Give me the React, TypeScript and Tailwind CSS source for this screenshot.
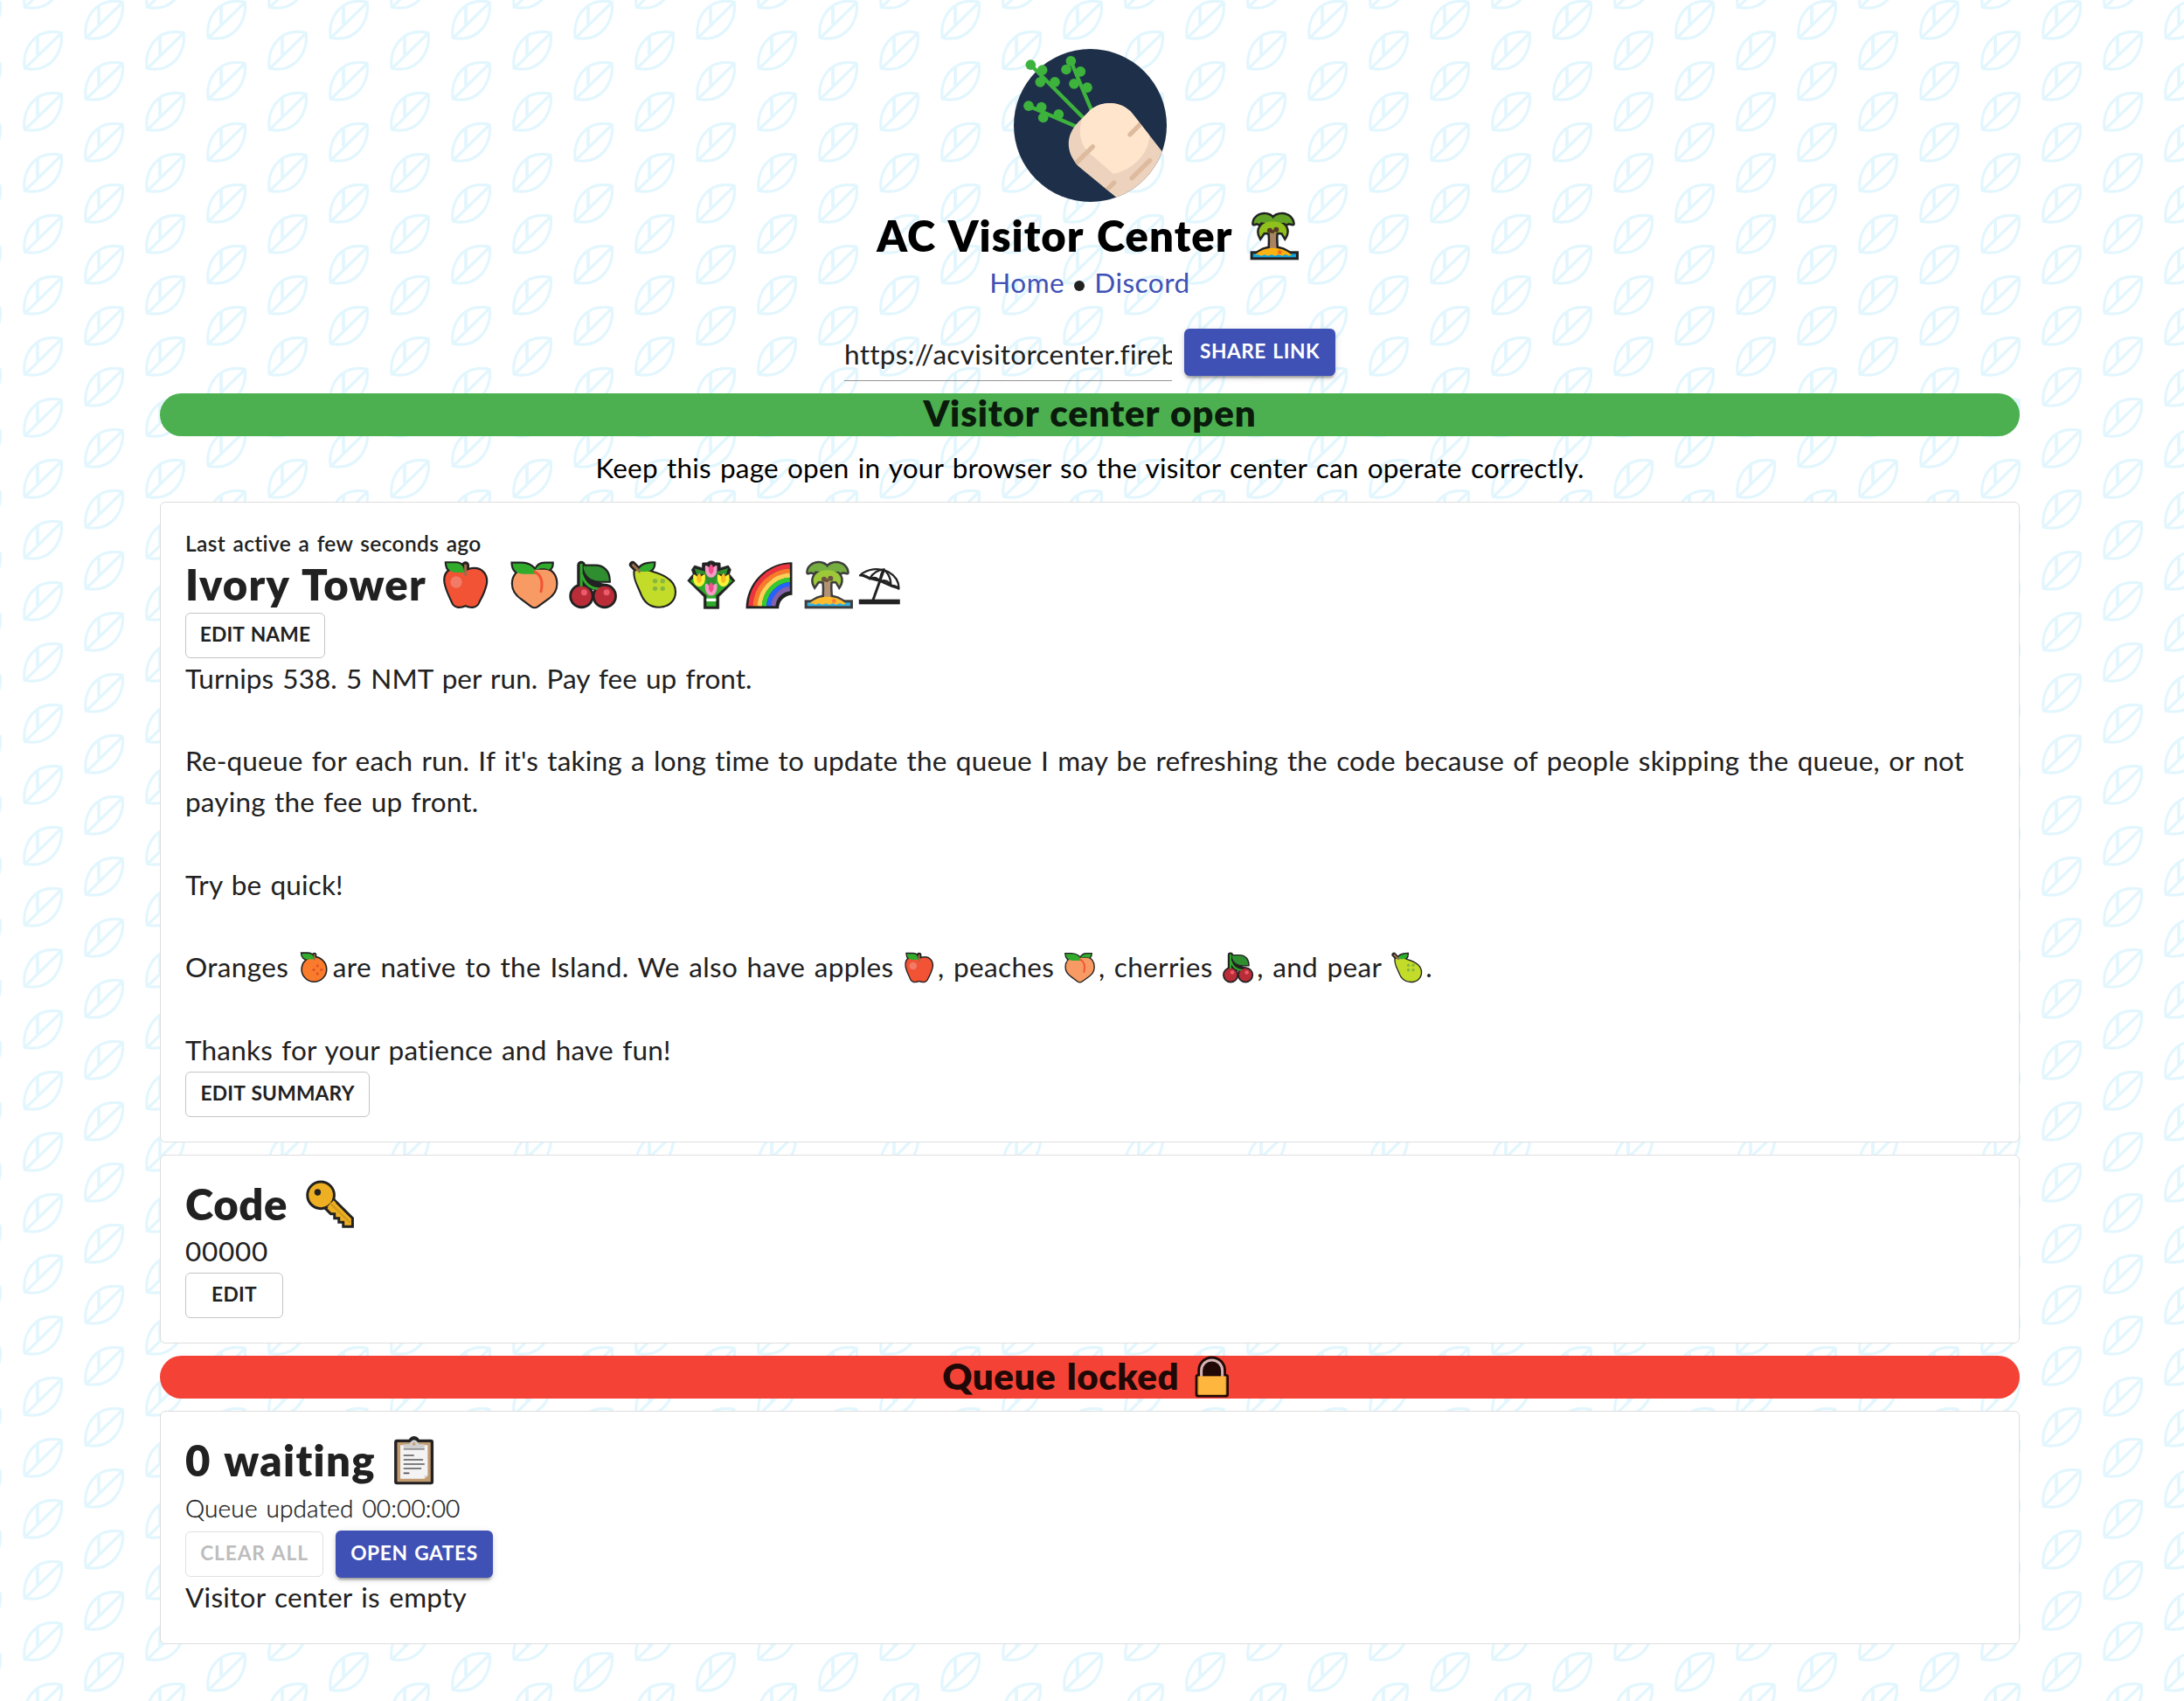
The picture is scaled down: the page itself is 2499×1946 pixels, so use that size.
import React from "react";

const INK = "#222222";

/* Glyph-sized drawing that scales with the surrounding font size. */
function Glyph({ box, label, className = "", children }: { box: string; label: string; className?: string; children: React.ReactNode }) {
  return (
    <svg
      viewBox={box}
      role="img"
      aria-label={label}
      className={"inline-block h-[1.1429em] w-[1.3714em] shrink-0 align-[-0.2041em] " + className}
    >
      {children}
    </svg>
  );
}

/* Draws a group twice: a thick dark outline first, then the coloured fills. */
function Outlined({ shape, width = 15 }: { shape: React.ReactNode; width?: number }) {
  return (
    <g fill={INK} stroke={INK} strokeWidth={width} strokeLinejoin="round">
      {shape}
    </g>
  );
}

function Apple({ className = "" }: { className?: string }) {
  const body = "M104 100C90 108 85 125 88 143C92 165 104 188 112 206C118 226 138 227 157 218C176 227 196 226 202 206C212 188 223 165 227 143C230 115 213 95 187 95C172 95 162 100 156 105C145 97 115 96 104 100Z";
  const leaf = "M92 75H125C142 75 153 88 152 107H125C105 107 93 95 92 75Z";
  return (
    <Glyph box="56 65 201.6 168" label="red apple" className={className}>
      <Outlined shape={<><path d={body} /><path d={leaf} strokeLinejoin="miter" /><path d="M157 82V112" strokeWidth="26" strokeLinecap="round" /></>} width={13} />
      <path d={body} fill="#f25335" />
      <path d={leaf} fill="#31ab2c" />
      <path d="M157 79V118" stroke="#9c6d48" strokeWidth="9" />
      <circle cx="125" cy="140" r="20" fill="#f27b68" />
    </Glyph>
  );
}

function Peach({ className = "" }: { className?: string }) {
  const body = "M320 145C320 118 338 98 362 97H430C455 98 468 120 468 145C468 168 456 183 441 194L404 221Q394 228 384 221L349 195C330 181 320 165 320 145Z";
  const l1 = "M319 76H350C377 76 396 92 402 112H357C334 112 320 98 319 76Z";
  const l2 = "M454 76H430C412 76 402 86 398 98C412 91 430 91 443 97C451 92 454 86 454 76Z";
  return (
    <Glyph box="293.1 65 201.6 168" label="peach" className={className}>
      <Outlined shape={<><path d={body} /><path d={l1} strokeLinejoin="miter" /><path d={l2} strokeLinejoin="miter" /></>} width={13} />
      <path d={body} fill="#f89a63" />
      <path d={l1} fill="#31ab2c" />
      <path d={l2} fill="#31ab2c" />
      <path d="M396 105C418 117 423 143 416 172" fill="none" stroke="#f25335" strokeWidth="9" strokeLinecap="round" />
    </Glyph>
  );
}

function Cherries({ className = "" }: { className?: string }) {
  const leaf = "M562 85H603C632 85 650 105 650 136H620C587 136 565 117 562 85Z";
  return (
    <Glyph box="494.7 65 201.6 168" label="cherries" className={className}>
      <Outlined shape={<><path d={leaf} strokeLinejoin="miter" /><circle cx="556" cy="188" r="36" /><circle cx="635" cy="188" r="36" /><path d="M555 82V150" strokeWidth="29" strokeLinecap="round" /><path d="M560 115L585 160H630V145" /></>} width={13} />
      <path d={leaf} fill="#2f8e30" />
      <path d="M556 112C566 145 585 163 618 163" fill="none" stroke="#31ab2c" strokeWidth="9" />
      <path d="M555 77V158" stroke="#31ab2c" strokeWidth="9" />
      <circle cx="556" cy="188" r="34" fill="#ba2d38" />
      <circle cx="635" cy="188" r="34" fill="#ba2d38" />
      <circle cx="565" cy="175" r="10.5" fill="#ec5a6c" />
      <circle cx="642" cy="175" r="10.5" fill="#ec5a6c" />
    </Glyph>
  );
}

function Pear({ className = "" }: { className?: string }) {
  const body = "M737 103C750 97 775 97 800 108C845 121 873 142 873 173C873 205 848 223 818 223C786 223 768 202 758 174C750 152 734 130 737 103Z";
  const leaf = "M748 103C752 86 770 75 802 75C802 95 790 104 772 104Z";
  return (
    <Glyph box="696.3 65 201.6 168" label="pear" className={className}>
      <Outlined shape={<><path d={body} /><path d={leaf} strokeLinejoin="miter" /><path d="M729 80L750 102" strokeWidth="24" strokeLinecap="round" /></>} width={13} />
      <path d={body} fill="#c3dc2a" />
      <path d={leaf} fill="#31ab2c" />
      <path d="M728 79L755 106" stroke="#9c6d48" strokeWidth="9" />
      {[[806, 136], [832, 136], [806, 162], [832, 162]].map(([x, y]) => (
        <circle key={x + "-" + y} cx={x} cy={y} r="8" fill="#86b740" />
      ))}
    </Glyph>
  );
}

function Tulip({ x, y, light, deep }: { x: number; y: number; light: string; deep: string }) {
  return (
    <g transform={`translate(${x} ${y})`}>
      <path d="M-20 -17C-12 -16 -9 -13 -7 -9Q0 -24 7 -9C9 -13 12 -16 20 -17C23 5 16 24 0 24C-16 24 -23 5 -20 -17Z" fill={light} />
      <path d="M0 -22C12 -12 11 8 0 13C-11 8 -12 -12 0 -22Z" fill={deep} />
    </g>
  );
}

function Bouquet() {
  return (
    <Glyph box="27.9 65 201.6 168" label="bouquet">
      <path d="M48 135L67 112L62 97L72 83L98 91L99 74L115 73Q129 61 144 73L160 74L161 91L188 83L197 97L192 112L211 135L156 190V231H104V190Z" fill={INK} stroke={INK} strokeWidth="2" strokeLinejoin="round" />
      <path d="M57 136L75 120H185L202 136L146 186V223H113V186Z" fill="#31ab2c" />
      <path d="M72 93L108 103L150 103L187 92L180 115L155 112L129 175L103 112L80 115Z" fill="#2f8e30" />
      <rect x="113" y="196" width="33" height="10" fill="#ffffff" />
      <Tulip x={88} y={131} light="#fdf23a" deep="#fbbb21" />
      <Tulip x={171} y={131} light="#fdf23a" deep="#fbbb21" />
      <Tulip x={129} y={100} light="#f59cc8" deep="#f24d8c" />
      <Tulip x={129} y={162} light="#f59cc8" deep="#f24d8c" />
    </Glyph>
  );
}

function Rainbow() {
  const bands: [number, string][] = [[143, "#ee343f"], [127.5, "#f97a2b"], [112, "#ffcf56"], [96.5, "#35cb2e"], [81, "#2463ff"], [65.5, "#8562ae"]];
  return (
    <Glyph box="229.5 65 201.6 168" label="rainbow">
      <path d="M249 231A159 159 0 0 1 408 72V184A47 47 0 0 0 362 231Z" fill={INK} />
      {bands.map(([r, c]) => (
        <path key={c} d={`M${408 - r} 222A${r} ${r} 0 0 1 400 ${228 - r}`} fill="none" stroke={c} strokeWidth="16" />
      ))}
    </Glyph>
  );
}

function Island({ className = "" }: { className?: string }) {
  const back = "M463 107C463 88 480 75 500 75C514 75 524 82 529 90C535 80 548 75 560 75C582 76 596 90 597 107L583 104L575 108L566 103L529 108L488 102L482 108L474 104Z";
  const front = "M486 153C476 135 480 112 508 102Q529 96 550 102C580 112 580 138 570 153L561 138L548 136L538 140L529 135L518 140L508 136L497 137Z";
  const trunk = "M517 130Q520 160 518 192H541Q538 160 540 130Z";
  const sand = "M467 216C485 197 508 190 529 190C552 190 575 197 593 216Z";
  return (
    <Glyph box="431.1 65 201.6 168" label="desert island" className={className}>
      <Outlined shape={<><path d={back} /><path d={front} strokeLinejoin="miter" /><path d={trunk} /><path d={sand} /></>} />
      <rect x="451" y="201" width="166" height="30" fill={INK} />
      <rect x="460" y="210" width="148" height="12" fill="#12a5e0" />
      <path d={trunk} fill="#a98460" />
      <path d={back} fill="#62a226" />
      <path d={front} fill="#8fc01b" />
      <circle cx="518" cy="130" r="9" fill="#573828" />
      <circle cx="540" cy="127" r="9" fill="#573828" />
      <circle cx="528" cy="134" r="6" fill="#573828" />
      <path d="M467 214C485 197 508 190 529 190C552 190 575 197 593 214L583 217L572 212L560 217L548 213L536 217L524 213L512 217L500 213L488 217L478 213Z" fill="#fdb20f" />
      <path d="M552 196L554 201L559 202L556 206L557 211L552 208L547 211L548 206L545 202L550 201Z" fill="#f8651c" stroke="#f8651c" strokeWidth="2" />
    </Glyph>
  );
}

function BeachUmbrella() {
  return (
    <svg viewBox="632.7 65 150 168" role="img" aria-label="umbrella on ground" className="inline-block h-[1.1429em] w-[1.0204em] shrink-0 align-[-0.2041em]">
      <rect x="638" y="199" width="141" height="17" fill={INK} />
      <g fill="none" stroke={INK} strokeWidth="7" strokeLinejoin="round" strokeLinecap="round">
        <path d="M724 97L686 203" strokeWidth="9" />
        <path d="M642 117C666 93 706 90 738 104C763 118 776 138 775 163C766 152 757 151 748 152C740 136 726 132 712 137C701 124 687 122 675 129C665 118 652 116 642 117Z" />
        <path d="M724 97C700 98 684 112 675 128M724 97C713 110 711 124 712 136M724 97C742 112 748 130 748 151" />
        <path d="M652 117L676 127L712 136L748 152L772 160" strokeWidth="9" />
      </g>
    </svg>
  );
}

function Orange({ className = "" }: { className?: string }) {
  return (
    <Glyph box="0 0 201.6 168" label="tangerine" className={className}>
      <Outlined shape={<><circle cx="100" cy="93" r="64" /><path d="M34 8H66C88 8 99 22 98 40H70C46 40 35 28 34 8Z" strokeLinejoin="miter" /><path d="M101 16V38" strokeWidth="25" strokeLinecap="round" /></>} width={13} />
      <circle cx="100" cy="93" r="63" fill="#fb7b2c" />
      <path d="M35 9H66C88 9 99 22 98 40H70C46 40 36 28 35 9Z" fill="#31ab2c" />
      <path d="M101 12V44" stroke="#9c6d48" strokeWidth="9" />
      {[[118, 75], [98, 96], [139, 96], [118, 117]].map(([x, y]) => (
        <circle key={x + "-" + y} cx={x} cy={y} r="8" fill="#e25627" />
      ))}
    </Glyph>
  );
}

function KeyGlyph() {
  return (
    <Glyph box="490.7 150 201.6 168" label="key">
      <path d="M607 219L669 281V310H637V295H622V281H607V266H594L575 247Z" fill="#eeb022" stroke={INK} strokeWidth="9" />
      <circle cx="560" cy="202" r="46" fill="#eeb022" stroke={INK} strokeWidth="9" />
      <path d="M582 242L604 220L612 228L590 250Z" fill="#eeb022" />
      <path d="M592 229L660 296" stroke="#d29c20" strokeWidth="8" />
      <circle cx="549" cy="192" r="11" fill={INK} />
    </Glyph>
  );
}

function Clipboard() {
  return (
    <Glyph box="775.7 129 201.6 168" label="clipboard">
      <circle cx="877" cy="149" r="20" fill={INK} />
      <rect x="809" y="140" width="135" height="155" rx="9" fill={INK} />
      <rect x="819" y="150" width="115" height="136" rx="2" fill="#c39b71" />
      <path d="M830 160H924V264L912 275H830Z" fill="#f3f3f3" />
      <path d="M912 275V264H924Z" fill="#d8d8d8" />
      <path d="M841 171V157H858Q863 156 864 150Q877 133 890 150Q891 156 896 157H913V171Z" fill="#cfcfcf" />
      <circle cx="877" cy="156" r="5" fill="#c39b71" />
      <rect x="841" y="171" width="72" height="5" fill="#8c8c8c" />
      <path d="M841 195H877M841 210H908M841 225H913M841 240H902M841 256H861" stroke="#5a5558" strokeWidth="5" />
    </Glyph>
  );
}

function Lock() {
  return (
    <Glyph box="959.1 61.3 172.8 144" label="locked">
      <path d="M996 135V112A49 49 0 0 1 1094 112V135Z" fill="#200806" />
      <rect x="988" y="124" width="115" height="80" rx="9" fill="#200806" />
      <path d="M1009 134V112A36 36 0 0 1 1081 112V134" fill="none" stroke="#d3b4b3" strokeWidth="9" />
      <rect x="996" y="132" width="99" height="63" fill="#dc9620" />
      <rect x="1000" y="132" width="91" height="63" fill="#ffb63f" />
    </Glyph>
  );
}

function TurnipLogo() {
  const body = "M282 298C236 345 238 402 282 450L440 580H640V490L468 270C430 222 352 222 315 265Z";
  const dots = [[118, 102], [158, 120], [151, 161], [201, 161], [256, 89], [240, 118], [289, 125], [267, 167], [312, 180], [111, 243], [155, 247], [161, 283], [214, 272]];
  return (
    <svg viewBox="60 47.5 525 525" className="h-[175px] w-[175px]" role="img" aria-label="Turnip logo">
      <defs>
        <clipPath id="disc"><circle cx="322.5" cy="310" r="262.5" /></clipPath>
        <clipPath id="turnip"><path d={body} /></clipPath>
      </defs>
      <circle cx="322.5" cy="310" r="262.5" fill="#1e3049" />
      <g stroke="#3db33d" strokeWidth="13">
        <path d="M118 102L310 295M256 90L334 275M111 243L285 318" />
      </g>
      {dots.map(([x, y]) => (
        <circle key={x + "-" + y} cx={x} cy={y} r="17.5" fill="#3db33d" />
      ))}
      <g clipPath="url(#disc)">
        <path d={body} fill="#edd3bd" />
        <g clipPath="url(#turnip)">
          <path d="M315 262C278 295 278 365 318 404Q350 432 402 476C468 462 522 410 526 345L540 200H320Z" fill="#ffe5cc" />
          <path d="M331 383L262 451M459 341L510 290M465 491L527 430M404 507L360 551" stroke="#debb9f" strokeWidth="16" strokeLinecap="round" />
        </g>
      </g>
    </svg>
  );
}

function LeafBackdrop() {
  return (
    <svg className="pointer-events-none absolute inset-0 h-full w-full" aria-hidden="true">
      <defs>
        <g id="leaf" fill="none" stroke="#e2f6fe" strokeWidth="3.2">
          <path d="M28.3 78.2C25 57 39 31 70 37.5C73.5 58 58 84.5 28.3 78.2Z" />
          <path d="M29 78L70 38" />
          <path d="M43 42V63" strokeWidth="3.7" />
        </g>
        <pattern id="leaves" width="140" height="70" patternUnits="userSpaceOnUse">
          <use href="#leaf" />
          <use href="#leaf" y="-70" />
          <use href="#leaf" x="70" y="-35" />
          <use href="#leaf" x="-70" y="-35" />
        </pattern>
      </defs>
      <rect width="100%" height="100%" fill="url(#leaves)" />
    </svg>
  );
}

function Button({ kind = "outlined", className = "", children }: { kind?: "outlined" | "disabled" | "primary"; className?: string; children: React.ReactNode }) {
  const look = {
    outlined: "h-[52px] border border-[#c4c4c4] text-[#212121] bg-white pb-px",
    disabled: "h-[52px] border border-[#e0e0e0] text-[#bdbdbd] bg-white pb-px",
    primary: "h-[54px] bg-[#3f51b5] text-white pb-px shadow-[0_5px_2px_-3px_rgba(0,0,0,0.2),0_3px_3px_0_rgba(0,0,0,0.14),0_2px_8px_0_rgba(0,0,0,0.12)]",
  }[kind];
  return (
    <button className={"flex shrink-0 items-center justify-center whitespace-nowrap rounded-[6px] text-[22.75px] font-bold leading-none [word-spacing:1.4px] " + look + " " + className}>
      {children}
    </button>
  );
}

const heading = "h-[57px] whitespace-nowrap text-[49px] font-extrabold leading-[57px] [word-spacing:3px]";
const card = "rounded-[6px] border border-[#dedede] bg-white px-[28px]";

export default function App() {
  return (
    <div className="relative h-[1946px] w-[2499px] overflow-hidden bg-white font-['Lato','Liberation_Sans',sans-serif] text-[31.5px] leading-[47.25px] tracking-[0.15px] text-[#212121] [word-spacing:2px]">
      <LeafBackdrop />
      <main className="relative ml-[183px] flex w-[2128px] flex-col pt-[56px]">
        <header className="flex flex-col items-center">
          <TurnipLogo />
          <h1 className={heading + " mt-[10px] tracking-[1.05px] text-black"}>
            AC Visitor Center<span className="ml-[13px]"><Island /></span>
          </h1>
          <nav className="mt-[2px] flex h-[47px] whitespace-pre">
            <a className="tracking-[0.5px] text-[#3f51b5]">Home</a>
            <span className="mx-[11px] flex h-[47px] items-center"><span className="mt-[6px] h-[12px] w-[12px] rounded-full bg-[#212121]" /></span>
            <a className="tracking-[0.5px] text-[#3f51b5]">Discord</a>
          </nav>
          <div className="mt-[29px] flex gap-[14px]">
            <input
              readOnly
              defaultValue="https://acvisitorcenter.firebaseapp.com"
              className="block h-[60px] w-[375px] border-b border-[#949494] bg-transparent pb-[6px] pt-[4px] tracking-[0.27px] outline-none"
            />
            <Button kind="primary" className="w-[173px] tracking-[0.5px]">SHARE LINK</Button>
          </div>
        </header>

        <section className="mt-[14px] h-[49px] rounded-full bg-[#4caf50] text-center text-[42px] font-extrabold leading-[45px] tracking-[0.85px] text-[#0a1a0b]">
          Visitor center open
        </section>
        <p className="mt-[13px] h-[47px] text-center tracking-[0.18px] text-black">
          Keep this page open in your browser so the visitor center can operate correctly.
        </p>

        <section className={card + " mt-[15px] h-[733px] pt-[29px]"}>
          <p className="h-[36px] text-[24.5px] font-semibold leading-[35px] tracking-[0.35px]">Last active a few seconds ago</p>
          <h2 className={heading + " tracking-[1.25px]"}>
            Ivory Tower
            <span className="ml-[11px] tracking-normal">
              <Apple className="mr-[12px]" /><Peach /><Cherries /><Pear /><Bouquet /><Rainbow /><Island className="opacity-[0.87]" /><BeachUmbrella />
            </span>
          </h2>
          <Button className="mt-[4px] w-[160px] tracking-[0.2px]">EDIT NAME</Button>
          <div className="-mt-[0.5px]">
            <p className="tracking-[0.06px]">Turnips 538. 5 NMT per run. Pay fee up front.</p>
            <p className="mt-[47.25px] tracking-[0.17px]">
              Re-queue for each run. If it's taking a long time to update the queue I may be refreshing the code because of people skipping the queue, or not paying the fee up front.
            </p>
            <p className="mt-[47.25px]">Try be quick!</p>
            <p className="mt-[47.25px] h-[47.25px] whitespace-nowrap tracking-[0.35px]">
              Oranges <Orange className="-ml-[3px]" />are native to the Island. We also have apples <Apple className="-ml-[3px]" />, peaches <Peach className="-ml-[3px]" />, cherries <Cherries className="-ml-[3px]" />, and pear <Pear className="-ml-[3px]" />.
            </p>
            <p className="mt-[47.25px] tracking-[0.2px]">Thanks for your patience and have fun!</p>
          </div>
          <Button className="mt-[1px] w-[211px] tracking-[0.2px]">EDIT SUMMARY</Button>
        </section>

        <section className={card + " mt-[14px] h-[216px] pt-[27px]"}>
          <h2 className={heading + " tracking-[0.6px]"}>
            Code<span className="ml-[15px]"><KeyGlyph /></span>
          </h2>
          <p className="mt-[2px] h-[47px] tracking-[0.7px]">00000</p>
          <Button className="mt-[1px] w-[112px] tracking-[0.3px]">EDIT</Button>
        </section>

        <section className="mt-[14px] h-[49px] whitespace-nowrap rounded-full bg-[#f44336] text-center text-[42px] font-extrabold leading-[43px] tracking-[0.6px] text-[#200806]">
          Queue locked<span className="ml-[9px]"><Lock /></span>
        </section>

        <section className={card + " mt-[14px] h-[267px] pt-[27px]"}>
          <h2 className={heading + " tracking-[1.3px]"}>
            0 waiting<span className="ml-[10px]"><Clipboard /></span>
          </h2>
          <p className="mt-[6px] h-[40px] text-[28px] font-light leading-[40px] [-webkit-text-stroke:0.35px_#212121]">Queue updated 00:00:00</p>
          <div className="mt-[6px] flex items-center gap-[14px]">
            <Button kind="disabled" className="w-[158px] tracking-[0.85px]">CLEAR ALL</Button>
            <Button kind="primary" className="w-[180px] tracking-[0.6px]">OPEN GATES</Button>
          </div>
          <p className="-mt-[1px] tracking-[0.25px]">Visitor center is empty</p>
        </section>
      </main>
    </div>
  );
}
